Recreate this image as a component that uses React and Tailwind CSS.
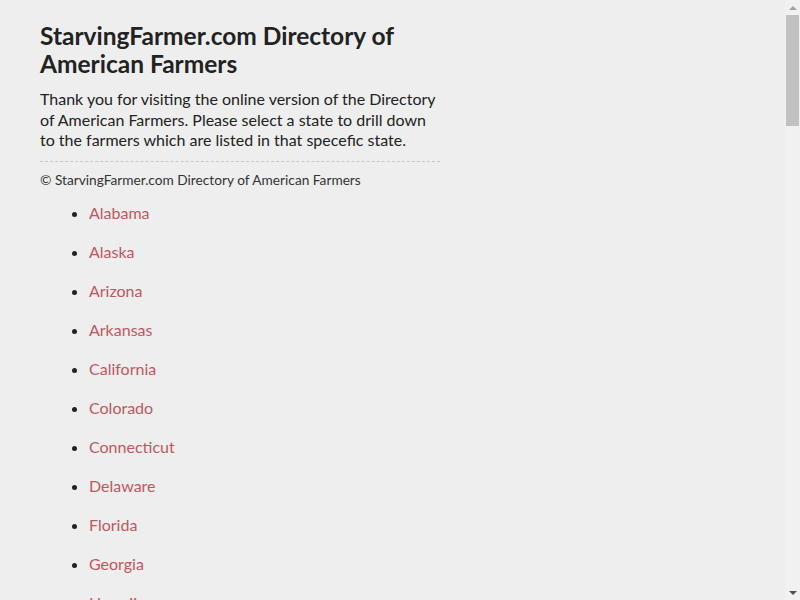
import React from "react";

const states = [
  "Alabama", "Alaska", "Arizona", "Arkansas", "California", "Colorado",
  "Connecticut", "Delaware", "Florida", "Georgia", "Hawaii", "Idaho",
  "Illinois", "Indiana", "Iowa", "Kansas",
];

export default function App() {
  return (
    <div className="min-h-screen bg-[#eeeeee] text-[#222222]" style={{ fontFamily: "Lato, 'Open Sans', sans-serif" }}>
      <div className="w-[400px] ml-[40px] pt-[22px] pb-10">
        <h1 className="text-[24.5px] leading-[28px] font-bold text-[#222222]">
          StarvingFarmer.com Directory of American Farmers
        </h1>
        <p className="mt-[11px] text-[16px] leading-[20.5px] text-[#222222]">
          Thank you for visiting the online version of the Directory of American Farmers. Please select a state to drill down to the farmers which are listed in that specefic state.
        </p>
        <div className="mt-[10px] border-t border-dashed border-[#c8c8c8]"></div>
        <p className="pt-[8px] text-[13.7px] leading-[20px] text-[#333333]">
          © StarvingFarmer.com Directory of American Farmers
        </p>
        {/* states */}
        <ul className="list-disc pl-[49px] mt-[13px]">
          {states.map((s) => (
            <li key={s} className="text-[16px] leading-[20px] mb-[19px] marker:text-[#222222]">
              <a href="#" className="text-[#c0575e]">{s}</a>
            </li>
          ))}
        </ul>
      </div>

      {/* fake browser scrollbar */}
      <div className="fixed top-0 right-0 h-screen w-[15px] bg-[#f1f1f1] flex flex-col items-center">
        <div className="h-[15px] flex items-center justify-center">
          <div className="w-0 h-0 border-l-[4px] border-r-[4px] border-b-[4px] border-l-transparent border-r-transparent border-b-[#a3a3a3]"></div>
        </div>
        <div className="w-[13px] h-[111px] bg-[#c1c1c1]"></div>
        <div className="flex-1"></div>
        <div className="h-[15px] flex items-center justify-center">
          <div className="w-0 h-0 border-l-[4px] border-r-[4px] border-t-[4px] border-l-transparent border-r-transparent border-t-[#505050]"></div>
        </div>
      </div>
    </div>
  );
}
